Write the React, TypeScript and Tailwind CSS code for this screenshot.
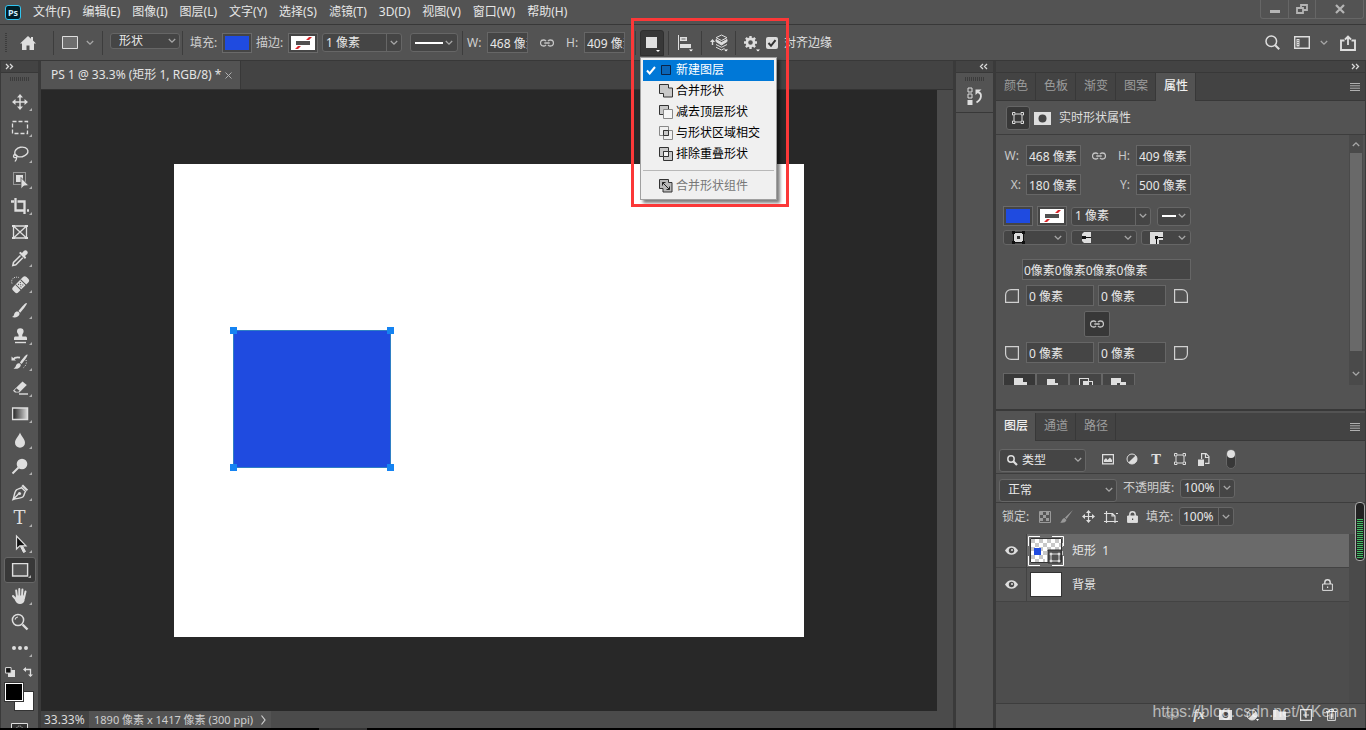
import React from 'react';
import clsx from 'clsx';

type Kids = { children: React.ReactNode };

/* ---------- small shared parts ---------- */

function Svg({ w, h = w, className, children }: Kids & { w: number; h?: number; className?: string }) {
  return (
    <svg
      width={w}
      height={h}
      viewBox={`0 0 ${w} ${h}`}
      fill="none"
      stroke="currentColor"
      aria-hidden="true"
      className={clsx('shrink-0', className)}
    >
      {children}
    </svg>
  );
}

const Chevron = ({ className }: { className?: string }) => (
  <Svg w={8} h={6} className={clsx('text-[#a8a8a8]', className)}>
    <path d="M.8 1 4 4.2 7.200 1" strokeWidth="1.300" />
  </Svg>
);

const DoubleArrow = ({ left }: { left?: boolean }) => (
  <Svg w={9} h={7} className="text-[#d8d8d8]">
    {left ? (
      <path d="M4 1 1.500 3.500 4 6M8 1 5.500 3.500 8 6" strokeWidth="1.300" />
    ) : (
      <path d="M1 1 3.500 3.500 1 6M5 1 7.500 3.500 5 6" strokeWidth="1.300" />
    )}
  </Svg>
);

const LinkIcon = () => (
  <Svg w={14} h={8} className="text-[#c4c4c4]">
    <path d="M6 2.200A2.600 2.600 0 0 0 4 1H3.500a2.700 2.700 0 0 0 0 6H4a2.600 2.600 0 0 0 2-1.200M8 2.200A2.600 2.600 0 0 1 10 1h.5a2.700 2.700 0 0 1 0 6H10a2.600 2.600 0 0 1-2-1.200M4.300 4h5.400" strokeWidth="1.300" />
  </Svg>
);

const BoundsIcon = () => (
  <Svg w={12}>
    <path d="M2 3.500v5M10 3.500v5M3.500 2h5M3.500 10h5" />
    <path d="M.5.5h2.500v2.500H.5zM9 .5h2.500v2.500H9zM.5 9h2.500v2.500H.5zM9 9h2.500v2.500H9z" />
  </Svg>
);

const Grip = ({ className }: { className?: string }) => (
  <Svg w={20} h={4} className={clsx('text-[#3c3c3c]', className)}>
    <path d="M0 2h20" strokeWidth="4" strokeDasharray="1 1" />
  </Svg>
);

const Sep = ({ className }: { className?: string }) => (
  <span className={clsx('h-6 w-px shrink-0 bg-[#3d3d3d]', className)} />
);

const fieldBox = 'border border-[#666] bg-[#454545] text-[#e8e8e8]';

function Field({ id, label, labelClass, value, className }: {
  id: string;
  label: string;
  labelClass?: string;
  value: string;
  className: string;
}) {
  return (
    <>
      <label htmlFor={id} className={clsx('shrink-0 whitespace-nowrap', labelClass)}>{label}</label>
      <input id={id} defaultValue={value} className={clsx('h-[21px] min-w-0 shrink-0 pl-0.5 outline-none', fieldBox, className)} />
    </>
  );
}

function Combo({ id, label, value, className }: { id: string; label: string; value: string; className: string }) {
  return (
    <div className={clsx('flex h-[19px] shrink-0 rounded-[3px]', fieldBox, className)}>
      <input id={id} aria-label={label} defaultValue={value} className="w-0 min-w-0 flex-1 bg-transparent pl-[3px] outline-none" />
      <button aria-label={`${label} ▾`} className="flex w-[15px] shrink-0 items-center justify-center border-l border-[#666]">
        <Chevron />
      </button>
    </div>
  );
}

function Dropdown({ label, value, className, selectClass }: {
  label: string;
  value: string;
  className: string;
  selectClass: string;
}) {
  return (
    <div className={clsx('relative shrink-0', className)}>
      <select aria-label={label} className={clsx('h-full w-full appearance-none rounded-[3px] leading-none outline-none', fieldBox, selectClass)}>
        <option>{value}</option>
      </select>
      <Chevron className="pointer-events-none absolute top-1/2 right-1 -translate-y-1/2" />
    </div>
  );
}

function IconDropdown({ label, className, children }: Kids & { label: string; className: string }) {
  return (
    <button aria-label={label} aria-haspopup="listbox" className={clsx('flex shrink-0 items-center justify-between rounded-[3px] pr-1', fieldBox, className)}>
      {children}
      <Chevron />
    </button>
  );
}

const FillSwatch = ({ className }: { className?: string }) => (
  <button aria-label="填充颜色" className={clsx('h-5 w-[30px] shrink-0 border border-[#6a6a6a] bg-[#454545] p-0.5', className)}>
    <span className="block h-full bg-[#1f4be0]" />
  </button>
);

const StrokeSwatch = ({ className }: { className?: string }) => (
  <button aria-label="描边颜色" className={clsx('h-5 w-[30px] shrink-0 border border-[#6a6a6a] bg-[#454545] p-0.5', className)}>
    <Svg w={24} h={14}>
      <path d="M0 0h24v14H0z" fill="#fff" stroke="none" />
      <path d="M4 13h3l3-3H7zM15 4h3l3-3h-3z" fill="#d9262b" stroke="none" />
      <path d="M5 5h14v4H5z" fill="#505050" stroke="none" />
    </Svg>
  </button>
);

/* ---------- menu bar ---------- */

const menus = ['文件(F)', '编辑(E)', '图像(I)', '图层(L)', '文字(Y)', '选择(S)', '滤镜(T)', '3D(D)', '视图(V)', '窗口(W)', '帮助(H)'];

function MenuBar() {
  return (
    <header className="flex h-[25px] shrink-0 items-center border-b border-[#383838] pl-[5px]">
      <span className="flex h-[15px] w-4 items-center justify-center rounded-[3px] border border-[#31c5f0] bg-[#001d26] text-[9px] leading-none font-bold text-[#cdeffb]">
        Ps
      </span>
      <nav className="ml-3 flex gap-3">
        {menus.map((m) => (
          <button key={m} className="whitespace-nowrap text-[#e6e6e6]">{m}</button>
        ))}
      </nav>
      <div className="mr-0.5 ml-auto flex h-[19px] self-start rounded-b-[3px] border border-t-0 border-[#666] text-[#b4b4b4]">
        <button aria-label="最小化" className="flex w-7 items-center justify-center border-r border-[#666]">
          <Svg w={10} h={10}><path d="M0 7.500h10" strokeWidth="3" /></Svg>
        </button>
        <button aria-label="还原" className="flex w-[27px] items-center justify-center border-r border-[#666]">
          <Svg w={12} h={10}>
            <path d="M5 1h6v5H5z" strokeWidth="1.800" />
            <path d="M1 4h6v5H1z" strokeWidth="1.800" fill="#535353" />
          </Svg>
        </button>
        <button aria-label="关闭" className="flex w-[47px] items-center justify-center">
          <Svg w={10} h={10}><path d="M1 1l8 8M9 1 1 9" strokeWidth="2.200" /></Svg>
        </button>
      </div>
    </header>
  );
}

/* ---------- path operation menu ---------- */

const PathIcons = {
  fresh: <path d="M2.500 2.500h9v9h-9z" fill="#0a66b8" stroke="#0b2447" />,
  unite: <path d="M.5.5h9v3.500h4v9h-9V9.500H.5z" fill="#c9c9c9" stroke="#333" />,
  subtract: (
    <>
      <path d="M.5.5h9v9h-9z" fill="#c9c9c9" stroke="#333" />
      <path d="M4.500 4.500h9v9h-9z" fill="#f6f6f6" stroke="#888" />
    </>
  ),
  intersect: (
    <>
      <path d="M.5.5h9v9h-9zM4.500 4.500h9v9h-9z" stroke="#888" />
      <path d="M4.500 4.500h5v5h-5z" fill="#c9c9c9" stroke="#333" />
    </>
  ),
  exclude: (
    <>
      <path d="M.5.5h9v9h-9zM4.500 4.500h9v9h-9z" fill="#c9c9c9" stroke="#333" />
      <path d="M4.500 4.500h5v5h-5z" fill="#f2f2f2" stroke="#333" />
    </>
  ),
  merge: (
    <>
      <path d="M.5.5h9v3h3.500v9.500h-9V9.500H.5z" fill="#b9b9b9" stroke="#333" />
      <path d="M3.500 6.500v-3h3M3.500 3.500l7 7M10.500 7.500v3h-3" stroke="#222" />
    </>
  ),
};

const pathOps: { label: string; icon: keyof typeof PathIcons }[] = [
  { label: '新建图层', icon: 'fresh' },
  { label: '合并形状', icon: 'unite' },
  { label: '减去顶层形状', icon: 'subtract' },
  { label: '与形状区域相交', icon: 'intersect' },
  { label: '排除重叠形状', icon: 'exclude' },
];

function PathOpMenu() {
  return (
    <div role="menu" className="absolute top-[27px] left-0 z-20 w-[137px] border border-[#a0a0a0] bg-[#f0f0f0] p-0.5 text-black shadow-[3px_3px_3px_rgba(0,0,0,0.5)]">
      {pathOps.map((op, i) => (
        <button
          key={op.label}
          role="menuitem"
          className={clsx('flex h-[21px] w-full items-center whitespace-nowrap', i === 0 && 'bg-[#0078d7] text-white')}
        >
          <Svg w={10} h={9} className="ml-[3px]">
            {i === 0 && <path d="M1 4.500 3.700 7.500 9 1" strokeWidth="2" />}
          </Svg>
          <Svg w={14} className="mx-[3px]">{PathIcons[op.icon]}</Svg>
          {op.label}
        </button>
      ))}
      <div className="my-[5px] h-px bg-[#b8b8b8]" />
      <button role="menuitem" disabled className="flex h-[21px] w-full items-center pl-4 whitespace-nowrap text-[#777]">
        <Svg w={14} className="mr-[3px]">{PathIcons.merge}</Svg>
        合并形状组件
      </button>
    </div>
  );
}

/* ---------- options bar ---------- */

function OptionsBar() {
  return (
    <div className="flex h-9 shrink-0 items-center border-b border-[#383838] pl-[5px] text-[#cfcfcf]">
      <Svg w={2} h={20} className="text-[#3c3c3c]"><path d="M1 0v20" strokeWidth="2" strokeDasharray="1 1" /></Svg>
      <button aria-label="主页" className="ml-3">
        <Svg w={18} h={16} className="text-[#dedede]">
          <path d="M9 1 1 8.500h2V15h4.500v-4.500h3V15H15V8.500h2L14 5.600V2h-2v1.800z" fill="currentColor" stroke="none" />
        </Svg>
      </button>
      <Sep className="ml-4" />
      <button aria-label="矩形工具" className="ml-2 flex items-center gap-2">
        <Svg w={16} h={13} className="text-[#dedede]"><path d="M.5.5h15v12H.5z" fill="#6e6e6e" /></Svg>
        <Chevron />
      </button>
      <Sep className="ml-2" />
      <Dropdown label="工具模式" value="形状" className="mb-1 ml-[7px] h-4 w-[70px]" selectClass="pl-2" />
      <Sep className="ml-0.5" />
      <span className="ml-[7px] w-7 shrink-0 whitespace-nowrap">填充:</span>
      <FillSwatch className="ml-1" />
      <span className="ml-1 w-7 shrink-0 whitespace-nowrap">描边:</span>
      <StrokeSwatch className="ml-1" />
      <Combo id="stroke-width" label="描边宽度" value="1 像素" className="ml-1 w-20" />
      <IconDropdown label="描边类型" className="ml-2 h-[19px] w-12 pl-1">
        <span className="h-0.5 w-7 bg-white" />
      </IconDropdown>
      <Sep className="ml-1" />
      <Field id="shape-w" label="W:" labelClass="ml-1 w-4" value="468 像素" className="ml-1 w-[41px]" />
      <button aria-label="链接宽高" className="ml-3"><LinkIcon /></button>
      <Field id="shape-h" label="H:" labelClass="ml-3 w-4" value="409 像素" className="ml-0.5 w-[41px]" />
      <Sep className="ml-2.5" />
      <div className="relative ml-1 shrink-0">
        <button aria-label="路径操作" aria-haspopup="menu" className="flex h-[26px] w-6 items-center justify-center rounded-t-[3px] border border-[#2f2f2f] bg-[#383838]">
          <Svg w={16} h={20}>
            <path d="M2 4h11v11H2z" fill="#e0e0e0" stroke="none" />
            <path d="M12 17h4l-2 2z" fill="#fff" stroke="none" />
          </Svg>
        </button>
        <PathOpMenu />
        {/* highlight frame round the open menu */}
        <div className="pointer-events-none absolute -top-3 -left-[9px] z-30 h-[189px] w-[158px] border-[3px] border-[#fb3838]" />
      </div>
      <Sep className="ml-1" />
      <button aria-label="路径对齐方式" className="ml-2">
        <Svg w={16} h={18} className="text-[#dedede]">
          <path d="M1.500 1v15" />
          <path d="M3 3h7v4H3zM3 10h11v4H3z" fill="currentColor" stroke="none" />
          <path d="M4.500 5h4" stroke="#666" />
          <path d="M12 15.500h4l-2 2z" fill="#fff" stroke="none" />
        </Svg>
      </button>
      <Sep className="ml-2" />
      <button aria-label="路径排列方式" className="ml-2">
        <Svg w={19} h={18} className="text-[#dedede]">
          <path d="M2.500 11V6.500" strokeWidth="1.400" />
          <path d="M0 8 2.500 5 5 8z" fill="currentColor" stroke="none" />
          <path d="M11.500 1 6 3.700l5.500 2.800L17 3.700z" />
          <path d="M6 5.500 11.500 8.500 17 5.500v2L11.500 11 6 7.500z" fill="currentColor" />
          <path d="m6 10.500 5.500 2.800 5.500-2.800M6 13.200l5.500 2.800 3-1.600" />
          <path d="M14 15.500h4l-2 2z" fill="#fff" stroke="none" />
        </Svg>
      </button>
      <Sep className="ml-1.5" />
      <button aria-label="设置" className="ml-2">
        <Svg w={16} h={18} className="text-[#dedede]">
          <circle cx="6.500" cy="8.500" r="3.600" strokeWidth="2.600" />
          <path d="M6.500 2v2.500M6.500 12.500V15M0 8.500h2.500M10.500 8.500H13M1.900 3.900l1.800 1.800M9.300 11.300l1.800 1.800M11.100 3.900 9.300 5.700M3.700 11.300l-1.800 1.800" strokeWidth="2.400" />
          <path d="M12 15.500h4l-2 2z" fill="#fff" stroke="none" />
        </Svg>
      </button>
      <label className="ml-1.5 flex items-center gap-1.5 whitespace-nowrap text-[#e0e0e0]">
        <span className="relative flex size-3">
          <input type="checkbox" defaultChecked className="peer size-3 appearance-none rounded-[2px] bg-[#dcdcdc]" />
          <Svg w={12} className="pointer-events-none absolute top-0 left-0 hidden text-[#333] peer-checked:block">
            <path d="M2.500 6 5 8.800 9.500 3.200" strokeWidth="2" />
          </Svg>
        </span>
        对齐边缘
      </label>
      <div className="mr-2.5 ml-auto flex items-center text-[#dedede]">
        <button aria-label="搜索">
          <Svg w={15}>
            <circle cx="6.300" cy="6.300" r="5.300" strokeWidth="1.500" />
            <path d="m10.200 10.200 4 4" strokeWidth="2" />
          </Svg>
        </button>
        <button aria-label="工作区" className="ml-3.5 flex items-center gap-2.5">
          <Svg w={16} h={13}>
            <path d="M.7.7h14.600v11.600H.7z" strokeWidth="1.400" />
            <path d="M2.500 3h3v7.500h-3z" fill="currentColor" stroke="none" />
            <path d="M4 4v6" stroke="#535353" strokeDasharray="1 1" />
          </Svg>
          <Chevron />
        </button>
        <button aria-label="共享" className="ml-3">
          <Svg w={16}>
            <path d="M4.500 5.500H1V15h14V5.500h-3.500" strokeWidth="1.900" />
            <path d="M8 10V2M5 4.500 8 1.500l3 3" strokeWidth="1.800" />
          </Svg>
        </button>
      </div>
    </div>
  );
}

/* ---------- tools ---------- */

const solid = { fill: 'currentColor', stroke: 'none' };

const tools: { name: string; flyout?: boolean; icon: React.ReactNode }[] = [
  { name: '移动', flyout: true, icon: (
    <>
      <path d="M10 4v12M4 10h12" strokeWidth="1.400" />
      <path d="m10 2 3 3.500H7zM10 18l3-3.500H7zM2 10l3.500-3v6zM18 10l-3.500-3v6z" {...solid} />
    </>
  ) },
  { name: '矩形选框', flyout: true, icon: <path d="M2.500 3.500h15v12h-15z" strokeDasharray="4 2" strokeWidth="1.300" /> },
  { name: '套索', flyout: true, icon: (
    <>
      <ellipse cx="11.300" cy="8" rx="6.700" ry="4.800" transform="rotate(-12 11.300 8)" strokeWidth="1.400" />
      <path d="M5.500 10.500c-2.500 0-2.800 3.200 0 3.200 2 0 2.200-2 .3-2.900M6.500 13.500c.5 2-.7 2.500-1.500 4" strokeWidth="1.300" />
    </>
  ) },
  { name: '对象选择', flyout: true, icon: (
    <>
      <path d="M3.500 2.500h12v12h-12z" strokeDasharray="1 1" />
      <path d="M6 5h7v7H6z" {...solid} />
      <path d="M11 7.500v11.500l2.800-3 5-.4z" {...solid} stroke="#535353" strokeWidth=".8" />
    </>
  ) },
  { name: '裁剪', flyout: true, icon: <path d="M1 5.500h3M5.500 2v12.500H15M7.500 5.500h7V18M17 14.500h2" strokeWidth="2.300" /> },
  { name: '图框', icon: (
    <>
      <path d="M3.500 4h13v12h-13zM3.500 4l13 12M16.500 4l-13 12" strokeWidth="1.300" />
      <path d="M2 3h3v2H2zM15 3h3v2h-3zM2 15h3v2H2zM15 15h3v2h-3z" {...solid} />
    </>
  ) },
  { name: '吸管', flyout: true, icon: (
    <>
      <path d="m10.500 7.500-7 7-.7 3 3-.7 7-7" strokeWidth="1.500" />
      <path d="m9 5 1.500-1.200 1.500 1.200 2-2.200c2-1.800 5 1 3.200 3.200L15 8l1.200 1.500L15 11z" {...solid} />
    </>
  ) },
  { name: '修复画笔', flyout: true, icon: (
    <>
      <g transform="rotate(-45 10.500 10.500)">
        <rect x="1" y="7" width="19" height="7.500" rx="2.500" {...solid} />
        <path d="M7 7v8M14 7v8" stroke="#535353" />
        <path d="M8.700 9h1M11.300 9h1M8.700 12.500h1M11.300 12.500h1M10 10.800h1" stroke="#535353" strokeWidth="1.200" />
      </g>
      <path d="M2 9.500c-1.500-4 2-7.500 7-6" strokeDasharray="1 1.200" />
    </>
  ) },
  { name: '画笔', flyout: true, icon: (
    <>
      <path d="M16.800 3c1 .7-5.300 8.500-6.600 9.700L8.500 11C9.500 9.500 15.500 2 16.800 3z" {...solid} />
      <path d="M7.500 11.500c1.500.2 2.300 1.400 2 2.800C9 17 5 18 2 17c2-.8 1.800-2 2.500-3.700.6-1.300 1.800-1.900 3-1.800z" {...solid} />
    </>
  ) },
  { name: '仿制图章', flyout: true, icon: (
    <>
      <path d="M7 5.500a3.300 3.300 0 0 1 6.600 0c0 2-1.800 2.500-1.300 5h3.200c.8 0 1.500.6 1.500 1.500V14H4v-2c0-.9.700-1.500 1.500-1.500h3.100C9.100 8 7 7.500 7 5.500z" {...solid} />
      <path d="M5 16.500h11" strokeWidth="1.400" />
    </>
  ) },
  { name: '历史记录画笔', flyout: true, icon: (
    <>
      <path d="M17.500 2.500c1 .7-4.500 8-6 9.500l-1.600-1.600c1.200-1.700 6.300-8.900 7.600-7.900z" {...solid} />
      <path d="M9 11.200c1.500.2 2 1.300 1.700 2.500-.7 2.600-4.200 3.800-7.200 2.800 2-.8 2-1.700 2.600-3.200.5-1.500 1.700-2.200 2.900-2.100z" {...solid} />
      <path d="M3 7.500c1.500-2 4-2.500 7-1.800" strokeWidth="1.700" />
      <path d="M1.500 4.500v4H6z" {...solid} />
      <path d="M16 8c1 3 0 6-3 8" strokeDasharray="1 1.500" />
    </>
  ) },
  { name: '橡皮擦', flyout: true, icon: (
    <>
      <path d="M12.500 3.500 16.800 7l-7.500 7.500H5L3 12.800z" {...solid} />
      <path d="M4.500 12.300 6.500 10.300l3 2.500-1 1h-2.400z" fill="#535353" stroke="none" />
      <path d="M9 16h9" strokeWidth="1.400" />
    </>
  ) },
  { name: '渐变', flyout: true, icon: (
    <>
      <defs>
        <linearGradient id="tool-grad">
          <stop offset="0" stopColor="#222" />
          <stop offset="1" stopColor="#ddd" />
        </linearGradient>
      </defs>
      <path d="M2.600 4h15v11.500h-15z" fill="url(#tool-grad)" strokeWidth="1.300" />
    </>
  ) },
  { name: '模糊', flyout: true, icon: <path d="M10 2.500c1 3.200 5 6.500 5 10.200a5 5 0 0 1-10 0C5 9 9 5.700 10 2.500z" {...solid} /> },
  { name: '减淡', flyout: true, icon: (
    <>
      <circle cx="12" cy="8" r="5.300" {...solid} />
      <path d="m8.500 11.500-6 6" strokeWidth="2" />
    </>
  ) },
  { name: '钢笔', flyout: true, icon: (
    <>
      <path d="M3 17.500c1.500-4 1.500-8.500 3.500-9.700 2-1.200 4-1.300 5-2.300l4 4c-1 1-1 3-2.200 5-1.200 2-6.300 1.500-10.300 3zM3 17.500l5.500-5.500" strokeWidth="1.400" />
      <circle cx="9.500" cy="11.500" r="1.600" {...solid} />
      <path d="m13 2.500 5.200 5.200L16.500 9 11.500 4z" {...solid} />
    </>
  ) },
  { name: '文字', flyout: true, icon: null },
  { name: '路径选择', flyout: true, icon: (
    <>
      <path d="m10.500 12.500 3 6 2-1-3-5.500z" fill="currentColor" />
      <path d="M6.500 2v13l3.300-3.200H16z" fill="#111" strokeWidth="1.200" />
    </>
  ) },
  { name: '矩形', flyout: true, icon: <path d="M2.600 3.600h15V16h-15z" fill="#535353" strokeWidth="1.400" /> },
  { name: '抓手', flyout: true, icon: (
    <>
      <path d="M6.200 4.500 7 11M9.300 3v7.500M12.400 3.500 12 11M15.500 5.500 14 12M3 10l4 4.500" strokeWidth="2" strokeLinecap="round" />
      <path d="M6 9.500h9l-.5 5c-.5 2-2 3.500-4.500 3.500s-4-1.500-5-4z" {...solid} />
    </>
  ) },
  { name: '缩放', icon: (
    <>
      <circle cx="8" cy="8" r="5.600" strokeWidth="1.500" />
      <path d="M5 7.500C5.500 6 6.500 5 8 5" strokeWidth="1.200" />
      <path d="m12.500 12.500 5 5" strokeWidth="2.400" />
    </>
  ) },
  { name: '更多', flyout: true, icon: <path d="M2 10a2 2 0 1 0 4 0 2 2 0 1 0-4 0M8 10a2 2 0 1 0 4 0 2 2 0 1 0-4 0M14 10a2 2 0 1 0 4 0 2 2 0 1 0-4 0" {...solid} /> },
];

function Toolbar() {
  return (
    <aside className="flex w-[41px] shrink-0 flex-col overflow-hidden border-x border-r-[3px] border-[#3a3a3a]">
      <div className="flex h-3 shrink-0 items-center border-b border-[#383838] bg-[#434343] pl-1"><DoubleArrow /></div>
      <Grip className="mx-auto mt-1 mb-2" />
      {tools.map((t) => (
        <button
          key={t.name}
          aria-label={t.name}
          className={clsx(
            'relative mx-auto flex h-[26px] w-8 shrink-0 items-center justify-center rounded-[3px] text-[#dedede]',
            t.name === '矩形' && 'border border-[#666] bg-[#383838]',
          )}
        >
          {t.icon ? <Svg w={20}>{t.icon}</Svg> : <span className="font-['DejaVu_Serif',serif] text-lg leading-none">T</span>}
          {t.flyout && (
            <Svg w={3} className="absolute right-1 bottom-1 text-[#b0b0b0]"><path d="M3 0v3H0z" {...solid} /></Svg>
          )}
        </button>
      ))}
      <div className="mt-1.5 flex shrink-0 gap-2 pl-1">
        <button aria-label="默认颜色">
          <Svg w={10} className="text-[#dedede]">
            <path d="M3 3h7v7H3z" {...solid} />
            <path d="M.6.6h5.500v5.500H.6z" fill="#111" />
          </Svg>
        </button>
        <button aria-label="切换颜色">
          <Svg w={10} className="text-[#dedede]">
            <path d="M2 2.500h5.500V8" strokeWidth="1.300" />
            <path d="M3 0v5L0 2.500zM5 7.500h5L7.500 10z" {...solid} />
          </Svg>
        </button>
      </div>
      <div className="relative mt-[5px] ml-[3px] h-[29px] w-[30px] shrink-0">
        <button aria-label="背景色" className="absolute right-0 bottom-0 size-5 border border-[#333] bg-white" />
        <button aria-label="前景色" className="absolute top-0 left-0 size-5 border border-[#333] bg-black ring-1 ring-white ring-inset" />
      </div>
      <button aria-label="快速蒙版" className="mx-auto mt-3 shrink-0">
        <Svg w={17} h={12} className="text-[#dedede]">
          <path d="M.5.5h16v11H.5z" fill="#333" />
          <circle cx="8.500" cy="6" r="3" strokeDasharray="1 1" />
        </Svg>
      </button>
    </aside>
  );
}

/* ---------- document ---------- */

function Handle({ className }: { className: string }) {
  return <span className={clsx('absolute size-[7px] bg-[#1583f2]', className)} />;
}

function DocumentArea() {
  return (
    <main className="flex min-w-0 flex-1 flex-col">
      <div className="flex h-[29px] shrink-0 border-b border-[#333] bg-[#434343]">
        <div className="flex w-[200px] items-center gap-1 border-r border-[#383838] bg-[#535353] pl-2.5 whitespace-nowrap text-[#e4e4e4]">
          PS 1 @ 33.3% (矩形 1, RGB/8) *
          <button aria-label="关闭文档">
            <Svg w={7} className="text-[#b0b0b0]"><path d="m.5.5 6 6M6.500.5l-6 6" /></Svg>
          </button>
        </div>
      </div>
      <div className="flex min-h-0 flex-1">
        <div className="flex min-w-0 flex-1 items-center justify-center overflow-hidden bg-[#282828]">
          <div className="relative h-[473px] w-[630px] shrink-0 bg-white">
            {/* selected shape on the canvas */}
            <div className="absolute top-[166px] left-[59px] h-[138px] w-[158px] border border-[#2f7fc4] bg-[#1f4be0]">
              <Handle className="-top-1 -left-1" />
              <Handle className="-top-1 -right-1" />
              <Handle className="-bottom-1 -left-1" />
              <Handle className="-right-1 -bottom-1" />
            </div>
          </div>
        </div>
        <div className="w-4 shrink-0 bg-[#4b4b4b]" />
      </div>
      <div className="flex h-[17px] shrink-0 items-center bg-[#4b4b4b] text-[#dcdcdc]">
        <span className="flex h-full w-12 items-center bg-[#434343] pl-[3px] whitespace-nowrap">33.33%</span>
        <span className="flex h-full items-center gap-2 bg-[#535353] px-[5px] text-[11px] whitespace-nowrap text-[#cfcfcf]">
          1890 像素 x 1417 像素 (300 ppi)
          <Svg w={5} h={10}><path d="m.5.5 3.500 4.500-3.500 4.500" strokeWidth="1.200" /></Svg>
        </span>
      </div>
    </main>
  );
}

/* ---------- panels ---------- */

function PanelTabs({ tabs, active }: { tabs: string[]; active: string }) {
  return (
    <div role="tablist" className="flex h-7 shrink-0 bg-[#434343]">
      {tabs.map((t) => (
        <button
          key={t}
          role="tab"
          aria-selected={t === active}
          className={clsx(
            'w-10 border-r border-[#383838] pb-0.5 pl-px',
            t === active ? 'bg-[#535353] font-medium text-[#f0f0f0]' : 'border-b text-[#9d9d9d]',
          )}
        >
          {t}
        </button>
      ))}
      <div className="flex flex-1 items-center justify-end border-b border-[#383838] pr-[5px]">
        <button aria-label="面板菜单">
          <Svg w={10} h={8} className="text-[#b0b0b0]"><path d="M0 .5h10M0 2.800h10M0 5.200h10M0 7.500h10" /></Svg>
        </button>
      </div>
    </div>
  );
}

function CornerIcon({ d }: { d: string }) {
  return <Svg w={14} className="text-[#d0d0d0]"><path d={d} strokeWidth="1.200" /></Svg>;
}

const cornerRows = [
  { left: 'M6 .6h7.400v12.800H.6V6C.6 3 3 .6 6 .6z', right: 'M.6.6H8c3 0 5.400 2.400 5.400 5.400v7.400H.6z', ids: ['左上', '右上'] },
  { left: 'M.6.6h12.800v12.800H6C3 13.400.6 11 .6 8z', right: 'M.6.6h12.800V8c0 3-2.400 5.400-5.400 5.400H.6z', ids: ['左下', '右下'] },
];

function CornerRow({ row }: { row: (typeof cornerRows)[number] }) {
  return (
    <div className="flex items-center pl-0.5">
      <CornerIcon d={row.left} />
      <input aria-label={row.ids[0]} defaultValue="0 像素" className={clsx('mr-1 ml-[7px] h-[21px] w-[68px] pl-0.5 outline-none', fieldBox)} />
      <input aria-label={row.ids[1]} defaultValue="0 像素" className={clsx('mr-2 h-[21px] w-[68px] pl-0.5 outline-none', fieldBox)} />
      <CornerIcon d={row.right} />
    </div>
  );
}

function PropertiesPanel() {
  return (
    <section className="flex shrink-0 flex-col border-b-2 border-[#383838] pb-6">
      <PanelTabs tabs={['颜色', '色板', '渐变', '图案', '属性']} active="属性" />
      <div className="flex h-[34px] shrink-0 items-center border-b border-[#3d3d3d] pt-px pl-2.5 text-[#dedede]">
        <button aria-label="形状属性" className="flex size-6 items-center justify-center rounded-[3px] border border-[#666] bg-[#383838]">
          <BoundsIcon />
        </button>
        <button aria-label="蒙版" className="mr-2 ml-1">
          <Svg w={17} h={13}>
            <path d="M0 0h17v13H0z" {...solid} />
            <circle cx="8.500" cy="6.500" r="4" fill="#454545" stroke="none" />
          </Svg>
        </button>
        实时形状属性
      </div>
      <div className="flex h-[250px] overflow-hidden">
        <div className="flex-1 pt-2.5 pl-[7px] text-[#c8c8c8]">
          <div className="flex items-center">
            <Field id="prop-w" label="W:" labelClass="w-5 pr-1 text-right" value="468 像素" className="ml-[3px] w-[55px]" />
            <button aria-label="链接" className="ml-[11px]"><LinkIcon /></button>
            <Field id="prop-h" label="H:" labelClass="ml-2 w-5 pr-1 text-right" value="409 像素" className="ml-0.5 w-[55px]" />
          </div>
          <div className="mt-2 flex items-center">
            <Field id="prop-x" label="X:" labelClass="w-5 pr-0.5 text-right" value="180 像素" className="ml-[3px] w-[55px]" />
            <Field id="prop-y" label="Y:" labelClass="ml-[33px] w-5 pr-1 text-right" value="500 像素" className="ml-0.5 w-[55px]" />
          </div>
          <div className="mt-[11px] flex items-center gap-1">
            <FillSwatch />
            <StrokeSwatch />
            <Combo id="prop-stroke" label="描边宽度" value="1 像素" className="w-20" />
            <IconDropdown label="描边类型" className="ml-0.5 h-[19px] w-[34px] pl-1">
              <span className="h-0.5 w-3.5 bg-white" />
            </IconDropdown>
          </div>
          <div className="mt-1 flex gap-1">
            <IconDropdown label="描边对齐" className="h-[15px] w-16 pl-2">
              <Svg w={13}>
                <path d="M1.500 1.500h10v10h-10z" fill="#ddd" stroke="#111" />
                <path d="M5 5h3v3H5z" fill="#333" stroke="none" />
                <path d="M0 0h3v3H0zM10 0h3v3h-3zM0 10h3v3H0zM10 10h3v3h-3z" fill="#111" stroke="none" />
              </Svg>
            </IconDropdown>
            <IconDropdown label="描边端点" className="h-[15px] w-[66px] pl-2">
              <Svg w={13} h={11}>
                <path d="M4 0h7v11H4L2 9V2z" fill="#ddd" stroke="none" />
                <path d="M2 4h4v3H2zM5 5h6v1H5z" fill="#111" stroke="none" />
              </Svg>
            </IconDropdown>
            <IconDropdown label="描边角点" className="h-[15px] w-[50px] pl-2">
              <Svg w={13} h={12}>
                <path d="M0 0h13v8H9v4H0z" fill="#ddd" stroke="none" />
                <path d="M5 4h3v3H5zM7 5h6v1H7zM6 6h1v6H6z" fill="#111" stroke="none" />
              </Svg>
            </IconDropdown>
          </div>
          <input aria-label="圆角半径" defaultValue="0像素0像素0像素0像素" className={clsx('mt-3.5 ml-[19px] block h-[21px] w-[169px] pl-px outline-none', fieldBox)} />
          <div className="mt-[5px]"><CornerRow row={cornerRows[0]} /></div>
          <button aria-label="链接圆角" className="my-[5px] ml-[81px] flex size-[26px] items-center justify-center rounded-[2px] border border-[#666] bg-[#383838]">
            <LinkIcon />
          </button>
          <CornerRow row={cornerRows[1]} />
          <div className="mt-2.5 flex text-[#dedede]">
            {[
              { name: '合并', d: 'M2 0h9v4h4v10H6v-4H2z' },
              { name: '减去', d: 'M2 1h8v4h3v8H2z' },
              { name: '相交', d: 'M1 0h10v3h4v10H5v-3H1zM2 1v8h3V3h5V1zM6 4v8h8V4h-3v6H6z' },
              { name: '排除', d: 'M0 0h10v4h5v9H5V8H0zM6 5v3h3V5z' },
            ].map((b, i) => (
              <button key={b.name} aria-label={b.name} className={clsx('flex h-6 w-[33px] justify-center border border-[#666] pt-1', i === 0 ? 'bg-[#383838]' : 'bg-[#454545]')}>
                <Svg w={16}><path d={b.d} {...solid} fillRule="evenodd" /></Svg>
              </button>
            ))}
          </div>
        </div>
        <div className="mr-0.5 flex w-3.5 shrink-0 flex-col items-center bg-[#4a4a4a] pt-1.5 pb-2">
          <Chevron className="rotate-180" />
          <div className="mt-1.5 mb-5 w-3 flex-1 bg-[#696969]" />
          <Chevron />
        </div>
      </div>
    </section>
  );
}

const EyeIcon = () => (
  <Svg w={13} h={9} className="text-[#dedede]">
    <path d="M0 4.500C3-1.200 10-1.200 13 4.500 10 10.200 3 10.200 0 4.500z" {...solid} />
    <circle cx="6.500" cy="4.500" r="2.700" fill="#4a4a4a" stroke="none" />
    <circle cx="7" cy="4" r="1" {...solid} />
  </Svg>
);

const LockIcon = ({ outline }: { outline?: boolean }) => (
  <Svg w={11} h={12} className="text-[#dedede]">
    <path d="M2.800 5V3.500a2.700 2.700 0 0 1 5.400 0V5" strokeWidth="1.400" />
    <path d="M.6 5h9.800v6.400H.6z" fill={outline ? 'none' : 'currentColor'} />
    <path d="M5 7.500h1.200v1.500H5z" fill={outline ? 'currentColor' : '#444'} stroke="none" />
  </Svg>
);

function LayersPanel() {
  return (
    <section className="relative flex min-h-0 flex-1 flex-col pt-0.5">
      <PanelTabs tabs={['图层', '通道', '路径']} active="图层" />
      <div className="flex h-[33px] shrink-0 items-center border-b border-[#3d3d3d] pt-1.5 pl-[3px] text-[#dedede]">
        <div className="relative">
          <Dropdown label="图层过滤" value="类型" className="h-[23px] w-[87px]" selectClass="pl-[22px]" />
          <Svg w={11} className="pointer-events-none absolute top-1.5 left-2">
            <circle cx="4" cy="4" r="3.200" strokeWidth="1.500" />
            <path d="m6.500 6.500 3.500 3.500" strokeWidth="2.200" />
          </Svg>
        </div>
        <div className="mb-0.5 ml-4 flex items-center gap-3">
          <button aria-label="像素图层">
            <Svg w={12} h={11}><path d="M.6.6h10.800v9.300H.6z" strokeWidth="1.200" /><path d="M2 8V6l2-2 1.500 2L8 3.500 10 6v2z" {...solid} /></Svg>
          </button>
          <button aria-label="调整图层">
            <Svg w={12}><circle cx="6" cy="6" r="5" /><path d="M9.600 2.400A5 5 0 0 1 2.400 9.600z" {...solid} /></Svg>
          </button>
          <button aria-label="文字图层" className="w-3 font-['DejaVu_Serif',serif] text-[13px] leading-none font-bold">T</button>
          <button aria-label="形状图层"><BoundsIcon /></button>
          <button aria-label="智能对象">
            <Svg w={12} h={13}><path d="M3.600 6V.6h4.500l2.800 2.800v7H7M7.500 1v3.500H11" strokeWidth="1.200" /><path d="M0 6.500h6V13H0z" {...solid} /></Svg>
          </button>
          <button aria-label="过滤开关" className="ml-1 flex h-5 w-2.5 items-start justify-center rounded-full border border-[#666] bg-[#383838]">
            <span className="size-2 shrink-0 rounded-full bg-[#e0e0e0]" />
          </button>
        </div>
      </div>
      <div className="flex h-[29px] shrink-0 items-center border-b border-[#3d3d3d] pt-1 pl-[3px]">
        <Dropdown label="混合模式" value="正常" className="h-[23px] w-[118px]" selectClass="pl-2" />
        <label htmlFor="opacity" className="mb-1 ml-1.5 w-[57px] whitespace-nowrap text-[#cfcfcf]">不透明度:</label>
        <div className="mb-1"><Combo id="opacity" label="不透明度" value="100%" className="w-[55px]" /></div>
      </div>
      <div className="flex h-[31px] shrink-0 items-center pb-1 pl-1.5 text-[#cfcfcf]">
        <span className="w-[37px] whitespace-nowrap">锁定:</span>
        <div className="flex items-center gap-[9px]">
          <button aria-label="锁定透明像素">
            <Svg w={12} className="text-[#9a9a9a]"><path d="M.5.5h11v11H.5z" /><path d="M1 1h3v3H1zM7 1h3v3H7zM4 4h3v3H4zM1 7h3v3H1zM7 7h3v3H7z" {...solid} /></Svg>
          </button>
          <button aria-label="锁定图像像素">
            <Svg w={13} className="text-[#999]"><path d="M13 0 6.500 9 5 7.500zM4.500 8l2 2c-1 3-4 3-6.500 2.500C2 12 2 8 4.500 8z" {...solid} /></Svg>
          </button>
          <button aria-label="锁定位置">
            <Svg w={13} className="text-[#dedede]"><path d="M6.500 1v11M1 6.500h11" strokeWidth="1.200" /><path d="M6.500 0 9 3H4zM6.500 13 9 10H4zM0 6.500 3 4v5zM13 6.500 10 4v5z" {...solid} /></Svg>
          </button>
          <button aria-label="锁定画板">
            <Svg w={14} h={12} className="text-[#dedede]"><path d="M2.500 0v12M0 2.500h8.500L11 5v7M0 10.500h14M12 2.500h2M8 2.500V5h3" strokeWidth="1.200" /></Svg>
          </button>
          <button aria-label="锁定全部"><LockIcon /></button>
        </div>
        <label htmlFor="fill" className="ml-2 w-[33px] whitespace-nowrap">填充:</label>
        <Combo id="fill" label="填充" value="100%" className="w-[55px]" />
      </div>

      <div className="flex min-h-0 flex-1 bg-[#4d4d4d] text-[#e6e6e6]">
        <ul className="flex-1">
          <li className="flex h-[34px] border-b border-[#434343] bg-[#535353]">
            <button aria-label="可见性" className="flex w-[30px] items-center justify-center"><EyeIcon /></button>
            <div className="flex flex-1 items-center border-l border-[#434343] bg-[#6a6a6a] pl-px">
              <Svg w={36} h={30}>
                <path d="M2 2h32v25H2z" fill="#fff" stroke="none" />
                <path d="M3 5h31M3 13h31M3 21h13" stroke="#c8c8c8" strokeWidth="4" strokeDasharray="4 4" />
                <path d="M7 9h31M7 17h31M7 25h10" stroke="#c8c8c8" strokeWidth="4" strokeDasharray="4 4" />
                <path d="M2.500 2.500h31v24h-31z" stroke="#333" />
                <path d="M6 12h7v7H6z" fill="#1f4be0" stroke="none" />
                <path d="M20 14h13v13H20z" fill="#535353" stroke="#333" />
                <path d="M23 18h8M23 25h8M23 18v7M31 18v7" stroke="#ddd" />
                <path d="M22 17h2v2h-2zM30 17h2v2h-2zM22 24h2v2h-2zM30 24h2v2h-2z" fill="#ddd" stroke="#ddd" strokeWidth=".5" />
                <path d="M.5 10V.5H12M24 .5h11.500V10M.5 20v9.500H12M24 29.500h11.500V20" stroke="#fff" />
              </Svg>
              <span className="ml-2 whitespace-pre">矩形  1</span>
            </div>
          </li>
          <li className="flex h-[34px] border-b border-[#434343] bg-[#535353]">
            <button aria-label="可见性" className="flex w-[30px] items-center justify-center"><EyeIcon /></button>
            <div className="flex flex-1 items-center border-l border-[#434343] pr-4 pl-[3px]">
              <span className="h-[25px] w-8 border border-[#333] bg-white" />
              <span className="ml-2.5 flex-1">背景</span>
              <LockIcon outline />
            </div>
          </li>
        </ul>
        <div className="w-4 bg-[#4a4a4a]" />
      </div>

      <div className="relative flex h-[25px] shrink-0 items-center justify-end gap-3.5 border-t border-[#3d3d3d] pr-7 pb-[3px] text-[#dedede]">
        <button aria-label="链接图层" className="opacity-50"><LinkIcon /></button>
        <button aria-label="图层样式" className="w-3 font-['Liberation_Serif',serif] text-sm leading-none font-bold italic">fx</button>
        <button aria-label="添加蒙版">
          <Svg w={13} h={10}><path d="M0 0h13v10H0z" {...solid} /><circle cx="6.500" cy="5" r="3" fill="#444" stroke="none" /></Svg>
        </button>
        <button aria-label="新建调整图层">
          <Svg w={13} h={12}><circle cx="6" cy="6" r="5" /><path d="M9.600 2.400A5 5 0 0 1 2.400 9.600z" {...solid} /><path d="M10 10h3l-1.500 2z" fill="#fff" stroke="none" /></Svg>
        </button>
        <button aria-label="新建组"><Svg w={13} h={10}><path d="M0 0h5l1 1.500h7V10H0z" {...solid} /></Svg></button>
        <button aria-label="新建图层"><Svg w={12}><path d="M.6.6h10.800v10.800H.6zM6 3v6M3 6h6" strokeWidth="1.200" /></Svg></button>
        <button aria-label="删除图层"><Svg w={11} h={12}><path d="M0 2.500h11M3.500 2V.6h4V2M1.600 3v8.400h7.800V3M4 4.500V10M5.500 4.500V10M7 4.500V10" /></Svg></button>
        <span className="pointer-events-none absolute right-2 bottom-1.5 font-['Liberation_Sans',sans-serif] text-base leading-5 text-white/60">
          https://blog.csdn.net/YKenan
        </span>
      </div>

      {/* level meter floating over the scrollbar */}
      <div className="absolute top-[91px] right-0 h-[59px] w-2.5 rounded-[4px] border border-[#aaa] bg-[#222] px-px pt-4 pb-0.5">
        <div className="h-full bg-[repeating-linear-gradient(to_bottom,#3fbf63_0,#3fbf63_1px,#222_1px,#222_2px)]" />
      </div>
    </section>
  );
}

export default function App() {
  return (
    <div className="flex h-screen flex-col overflow-hidden bg-[#535353] font-['Noto_Sans','Noto_Sans_CJK_SC',sans-serif] text-xs leading-4 text-[#dcdcdc]">
      <MenuBar />
      <OptionsBar />
      <div className="flex min-h-0 flex-1">
        <Toolbar />
        <DocumentArea />
        <aside className="flex w-[43px] shrink-0 flex-col border-x-[3px] border-[#3a3a3a]">
          <div className="flex h-3 shrink-0 items-center justify-end border-b border-[#383838] bg-[#434343] pr-[5px]"><DoubleArrow left /></div>
          <div className="flex h-10 flex-col items-center border-b border-[#383838] pt-1">
            <Grip />
            <button aria-label="历史记录" className="mt-1.5">
              <Svg w={16} h={18} className="text-[#dedede]">
                <path d="M1 1h4v4H1zM1 7h4v4H1z" />
                <path d="M.5 13h5v5h-5z" {...solid} />
                <path d="M10.500 5c5 1 4.500 7-1 10.500" strokeWidth="1.800" />
                <path d="M8.500 8V2.500h6z" {...solid} />
              </Svg>
            </button>
          </div>
        </aside>
        <aside className="flex w-[370px] shrink-0 flex-col border-r border-[#3a3a3a]">
          <div className="flex h-3 shrink-0 items-center justify-end border-b border-[#383838] bg-[#434343] pr-[5px]"><DoubleArrow /></div>
          <PropertiesPanel />
          <LayersPanel />
        </aside>
      </div>
      <div className="h-0.5 shrink-0 bg-black pl-[319px]"><div className="h-full w-12 bg-[#333]" /></div>
    </div>
  );
}
